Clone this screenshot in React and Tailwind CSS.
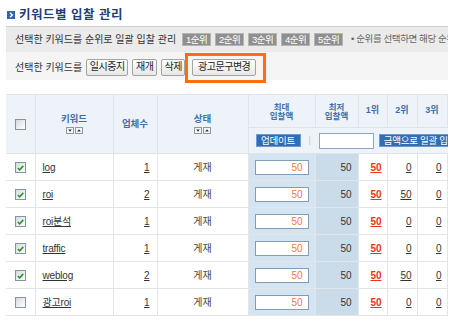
const rows = [
  { kw: 'log', cnt: 1, r2: '0', on: true },
  { kw: 'roi', cnt: 2, r2: '50', on: true },
  { kw: 'roi분석', cnt: 1, r2: '0', on: true },
  { kw: 'traffic', cnt: 1, r2: '0', on: true },
  { kw: 'weblog', cnt: 2, r2: '50', on: true },
  { kw: '광고roi', cnt: 1, r2: '0', on: false },
]

const Check = ({ on }) => (
  <span className="inline-flex w-[11px] h-[11px] items-center justify-center border border-[#8594a2] bg-linear-to-br from-[#d6dade] to-white align-middle">
    {on && (
      <svg width="7" height="6" viewBox="0 0 7 6">
        <path d="M0.8 3 L2.7 4.9 L6.3 0.9" stroke="#2e9a2e" strokeWidth="1.6" fill="none" />
      </svg>
    )}
  </span>
)

const Sort = () => (
  <svg width="17" height="7" viewBox="0 0 17 7">
    <rect x="0.5" y="0.5" width="7" height="6" fill="#f4f6f8" stroke="#8c9aa6" />
    <path d="M2.2 2.6 H5.8 L4 4.8Z" fill="#333" />
    <rect x="9.5" y="0.5" width="7" height="6" fill="#f4f6f8" stroke="#8c9aa6" />
    <path d="M11.2 4.6 H14.8 L13 2.3Z" fill="#333" />
  </svg>
)

const RankBtn = ({ label }) => (
  <span className="flex w-[29px] h-[13px] items-center justify-center bg-[#8f8f8f] border border-[#b5b5b5] text-white text-[9.5px] tracking-[-0.5px] leading-none">
    {label}
  </span>
)

const Btn = ({ label, w }) => (
  <span className={`flex ${w} h-[17px] items-center justify-center rounded-[2px] border border-[#a3a3a3] bg-linear-to-b from-white to-[#e6e6e6] text-[#222] text-[10px] tracking-[-0.5px] leading-none`}>
    {label}
  </span>
)

export default function App() {
  return (
    <div className="w-[455px] h-[321px] bg-white overflow-hidden font-['Liberation_Sans','Noto_Sans_CJK_KR',sans-serif] text-[#333]">
      <div className="ml-[6px] w-[442px] overflow-hidden">
        {/* title */}
        <div className="flex h-[26px] items-center pl-[1px] pt-[4px] gap-[4px]">
          <svg width="8" height="8" viewBox="0 0 8 8">
            <rect width="8" height="8" fill="#2e64ae" />
            <path d="M3 1.8 L5.3 4 L3 6.2" stroke="#fff" strokeWidth="1.4" fill="none" />
          </svg>
          <span className="text-[12.5px] tracking-[0.5px] font-bold text-[#1f3f78] leading-none">키워드별 입찰 관리</span>
        </div>

        {/* action bar */}
        <div className="border-t border-[#cfcfcf]">
          <div className="flex h-[25px] items-center bg-[#ebebeb] pl-[9px] whitespace-nowrap">
            <span className="text-[10px] text-[#333] mr-[6px]">선택한 키워드를 순위로 일괄 입찰 관리</span>
            <div className="flex gap-[4px]">
              <RankBtn label="1순위" />
              <RankBtn label="2순위" />
              <RankBtn label="3순위" />
              <RankBtn label="4순위" />
              <RankBtn label="5순위" />
            </div>
            <span className="ml-[8px] text-[9.5px] tracking-[-0.4px] text-[#666]">• 순위를 선택하면 해당 순위로 입찰가가 일괄 변경됩니다.</span>
          </div>
          <div className="flex h-[28px] items-center bg-[#f5f5f5] pl-[9px] pt-[2px] whitespace-nowrap">
            <span className="text-[10px] text-[#333] mr-[4px]">선택한 키워드를</span>
            <div className="flex gap-[4px]">
              <Btn label="일시중지" w="w-[42px]" />
              <Btn label="재개" w="w-[25px]" />
              <Btn label="삭제" w="w-[24px]" />
            </div>
            <span className="relative ml-[7px]">
              <Btn label="광고문구변경" w="w-[64px]" />
              <span className="absolute -left-[7px] -right-[10px] -top-[6px] -bottom-[7px] border-[3px] border-[#ff6c14]" />
            </span>
          </div>
        </div>

        {/* table */}
        <table className="mt-[14px] border-collapse table-fixed w-[471px] text-[10px]">
          <colgroup>
            <col className="w-[29px]" />
            <col className="w-[78px]" />
            <col className="w-[44px]" />
            <col className="w-[91px]" />
            <col className="w-[67px]" />
            <col className="w-[43px]" />
            <col className="w-[29px]" />
            <col className="w-[30px]" />
            <col className="w-[30px]" />
            <col className="w-[30px]" />
          </colgroup>
          <thead className="bg-[#edf3f8] text-[#3f6fa6] font-bold">
            <tr className="h-[33px]">
              <th rowSpan={2} className="border border-[#dde5ec] border-l-0 align-middle">
                <Check on={false} />
              </th>
              <th rowSpan={2} className="border border-[#dde5ec] align-middle">
                <div className="flex flex-col items-center gap-[3px]">
                  <span className="text-[9.5px] leading-[10px]">키워드</span>
                  <Sort />
                </div>
              </th>
              <th rowSpan={2} className="border border-[#dde5ec] align-middle text-[9.5px]">업체수</th>
              <th rowSpan={2} className="border border-[#dde5ec] align-middle">
                <div className="flex flex-col items-center gap-[3px]">
                  <span className="text-[9.5px] leading-[10px]">상태</span>
                  <Sort />
                </div>
              </th>
              <th className="border border-[#dde5ec] text-[8.5px] leading-[9px] pt-[1px]">최대<br />입찰액</th>
              <th className="border border-[#dde5ec] text-[8.5px] leading-[9px] pt-[1px]">최저<br />입찰액</th>
              <th className="border border-[#dde5ec] text-[9px]">1위</th>
              <th className="border border-[#dde5ec] text-[9px]">2위</th>
              <th className="border border-[#dde5ec] text-[9px]">3위</th>
              <th className="border border-[#dde5ec] text-[9px]">4위</th>
            </tr>
            <tr className="h-[26px]">
              <th colSpan={6} className="border border-[#dde5ec] font-normal">
                <div className="flex items-center pl-[7px] whitespace-nowrap">
                  <span className="flex w-[45px] h-[13px] items-center justify-center bg-[#2f6db4] border border-[#6f9ad0] text-white text-[9.5px] tracking-[-0.3px] leading-none">업데이트</span>
                  <span className="ml-[8px] text-[#c4c4c4] text-[9px] leading-none">|</span>
                  <span className="ml-[8px] w-[55px] h-[16px] bg-white border border-[#8ea6bf]" />
                  <span className="ml-[5px] flex h-[13px] items-center px-[4px] bg-[#2f6db4] border border-[#6f9ad0] text-white text-[9.5px] tracking-[-0.3px] leading-none">금액으로 일괄 입찰</span>
                </div>
              </th>
            </tr>
          </thead>
          <tbody>
            {rows.map((r) => (
              <tr key={r.kw} className="h-[27px]">
                <td className="border border-[#e1e6ea] border-l-0 text-center align-middle">
                  <Check on={r.on} />
                </td>
                <td className="border border-[#e1e6ea] pl-[7px]">
                  <span className="underline text-[#333] tracking-[-0.2px]">{r.kw}</span>
                </td>
                <td className="border border-[#e1e6ea] text-right pr-[7px]">
                  <span className="underline">{r.cnt}</span>
                </td>
                <td className="border border-[#e1e6ea] text-center text-[#444]">게재</td>
                <td className="border border-[#e1e6ea] bg-[#d4e5f1] pl-[6px]">
                  <div className="flex w-[54px] h-[15px] items-center justify-end pr-[5px] bg-white border border-[#7f9db9] text-[#f07a3a]">50</div>
                </td>
                <td className="border border-[#e1e6ea] bg-[#cadcea] text-right pr-[6px] text-[#333]">50</td>
                <td className="border border-[#e1e6ea] text-right pr-[5px]">
                  <span className="underline font-bold text-[#e8341c]">50</span>
                </td>
                <td className="border border-[#e1e6ea] text-right pr-[5px]">
                  <span className="underline">{r.r2}</span>
                </td>
                <td className="border border-[#e1e6ea] text-right pr-[5px]">
                  <span className="underline">0</span>
                </td>
                <td className="border border-[#e1e6ea] text-right pr-[5px]">
                  <span className="underline">0</span>
                </td>
              </tr>
            ))}
          </tbody>
        </table>
      </div>
    </div>
  )
}
